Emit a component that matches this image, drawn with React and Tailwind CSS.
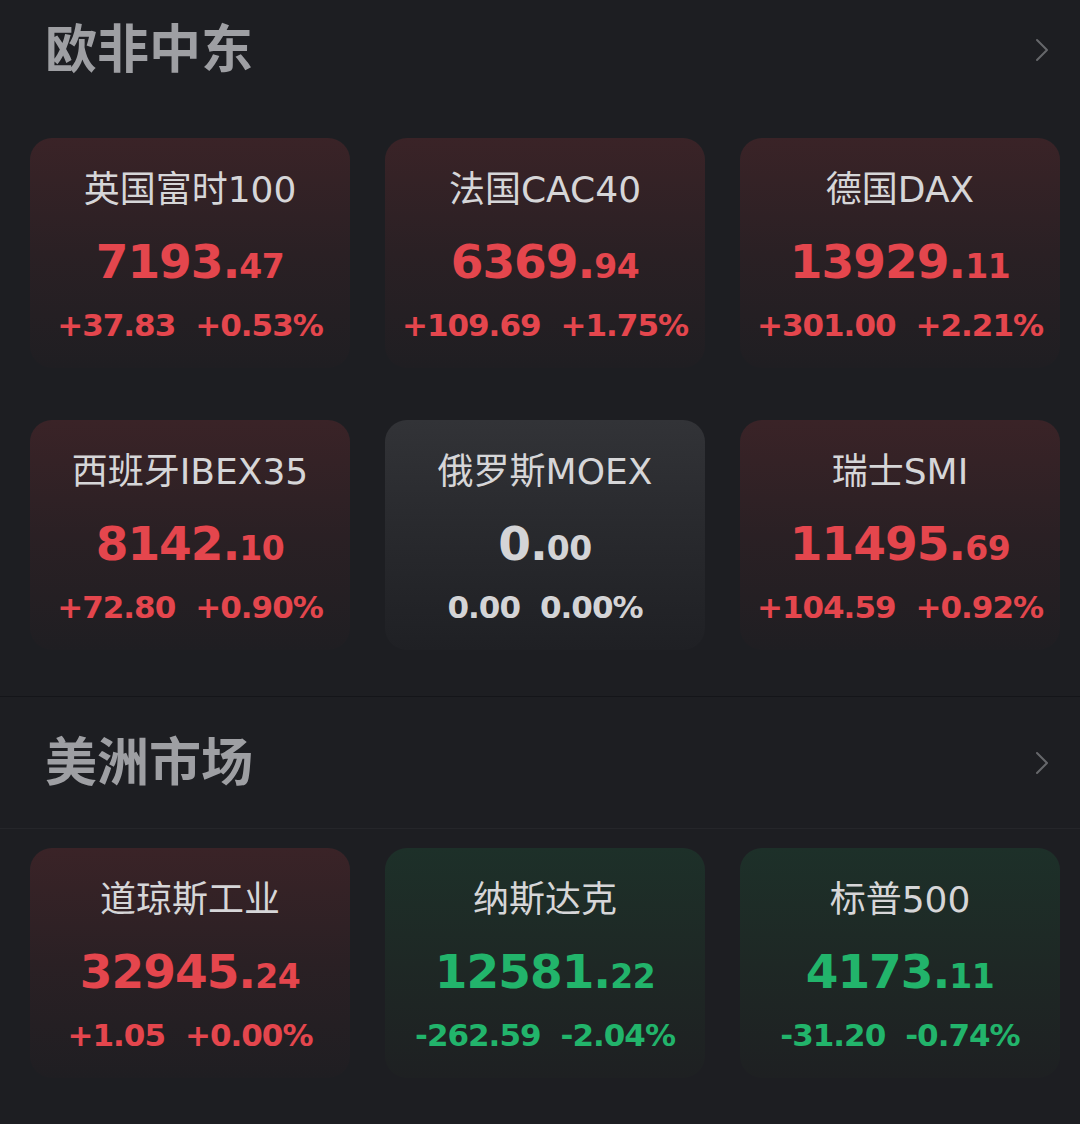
import React from 'react'
import { ChevronRight } from 'lucide-react'

const FONT = { fontFamily: '"DejaVu Sans", "Noto Sans CJK SC", sans-serif' }

const europe = [
  { name: '英国富时100', int: '7193', dec: '47', chg: '+37.83', pct: '+0.53%', tone: 'up' },
  { name: '法国CAC40', int: '6369', dec: '94', chg: '+109.69', pct: '+1.75%', tone: 'up' },
  { name: '德国DAX', int: '13929', dec: '11', chg: '+301.00', pct: '+2.21%', tone: 'up' },
  { name: '西班牙IBEX35', int: '8142', dec: '10', chg: '+72.80', pct: '+0.90%', tone: 'up' },
  { name: '俄罗斯MOEX', int: '0', dec: '00', chg: '0.00', pct: '0.00%', tone: 'flat' },
  { name: '瑞士SMI', int: '11495', dec: '69', chg: '+104.59', pct: '+0.92%', tone: 'up' },
]

const america = [
  { name: '道琼斯工业', int: '32945', dec: '24', chg: '+1.05', pct: '+0.00%', tone: 'up' },
  { name: '纳斯达克', int: '12581', dec: '22', chg: '-262.59', pct: '-2.04%', tone: 'down' },
  { name: '标普500', int: '4173', dec: '11', chg: '-31.20', pct: '-0.74%', tone: 'down' },
]

const tones = {
  up: {
    card: 'bg-gradient-to-b from-[#3a2327] via-[#2a2024] to-[#1f1e22]',
    text: 'text-[#e4464d]',
  },
  down: {
    card: 'bg-gradient-to-b from-[#1d3029] via-[#1e2825] to-[#1e2022]',
    text: 'text-[#22b46b]',
  },
  flat: {
    card: 'bg-gradient-to-b from-[#323337] via-[#28292d] to-[#1f2024]',
    text: 'text-[#d4d4d6]',
  },
}

const QuoteCard = ({ item }) => {
  const t = tones[item.tone]
  return (
    <div className={`h-[230px] rounded-[22px] ${t.card} flex flex-col items-center pt-[30px]`}>
      <div className="h-[44px] leading-[44px] text-[36px] text-[#d6d6d8] whitespace-nowrap">
        {item.name}
      </div>
      <div className={`mt-[26px] h-[56px] flex items-baseline justify-center font-bold leading-none ${t.text}`}>
        <span className="text-[47px] tracking-[-1px]">{item.int}.</span>
        <span className="text-[33px] tracking-[-0.5px]">{item.dec}</span>
      </div>
      <div className={`mt-[11px] h-[40px] flex items-center gap-[20px] text-[31px] font-bold tracking-[-1px] whitespace-nowrap ${t.text}`}>
        <span>{item.chg}</span>
        <span>{item.pct}</span>
      </div>
    </div>
  )
}

const SectionHeader = ({ title, className }) => (
  <div className={`flex items-center justify-between pl-[45px] pr-[18px] ${className}`}>
    <h2 className="text-[52px] font-bold text-[#9e9fa3] leading-none">{title}</h2>
    <ChevronRight size={40} strokeWidth={1.2} className="text-[#66676b]" />
  </div>
)

export default function App() {
  return (
    <div className="w-full min-h-[1124px] bg-[#1d1e22] overflow-hidden" style={FONT}>
      <section className="border-b border-[#141519] pb-[46px]">
        <SectionHeader title="欧非中东" className="h-[100px]" />
        <div className="mt-[38px] grid grid-cols-3 gap-x-[35px] gap-y-[52px] pl-[30px] pr-[20px]">
          {europe.map((item) => (
            <QuoteCard key={item.name} item={item} />
          ))}
        </div>
      </section>

      <section>
        <SectionHeader title="美洲市场" className="h-[132px] border-b border-[#25262a]" />
        <div className="mt-[19px] grid grid-cols-3 gap-x-[35px] pl-[30px] pr-[20px]">
          {america.map((item) => (
            <QuoteCard key={item.name} item={item} />
          ))}
        </div>
      </section>
    </div>
  )
}
